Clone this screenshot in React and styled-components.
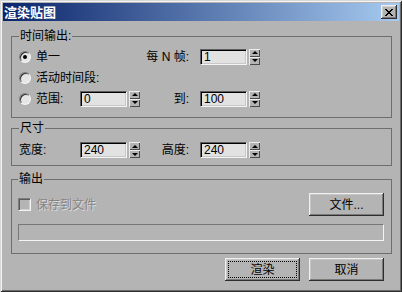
import React from "react";
import styled, { createGlobalStyle } from "styled-components";

const FACE = "#b4b4b4";

const GlobalStyle = createGlobalStyle`
  html, body {
    margin: 0;
    padding: 0;
  }
  body {
    background: ${FACE};
    font-family: "Liberation Sans", "Noto Sans CJK SC", sans-serif;
    font-size: 12px;
    color: #000;
  }
`;

const Window = styled.div`
  width: 402px;
  height: 292px;
  box-sizing: border-box;
  padding: 3px;
  background: ${FACE};
  display: flex;
  flex-direction: column;
  box-shadow: inset 1px 1px 0 #d8d8d8, inset -1px -1px 0 #2e2e2e,
    inset 2px 2px 0 #f4f4f4, inset -2px -2px 0 #6a6a6a;
`;

const TitleBar = styled.div`
  height: 18px;
  flex: none;
  display: flex;
  align-items: center;
  justify-content: space-between;
  padding: 0 2px 0 1px;
  background: linear-gradient(to right, #0a246a, #a6caf0);
`;

const Title = styled.span`
  color: #fff;
  font-family: "Noto Sans CJK SC", sans-serif;
  font-weight: 700;
  font-size: 13px;
  line-height: 18px;
`;

const CloseButton = styled.div`
  width: 16px;
  height: 14px;
  box-sizing: border-box;
  background: ${FACE};
  display: flex;
  align-items: center;
  justify-content: center;
  box-shadow: inset -1px -1px 0 #303030, inset 1px 1px 0 #f0f0f0,
    inset -2px -2px 0 #7a7a7a, inset 2px 2px 0 #cfcfcf;
`;

const Body = styled.div`
  flex: 1;
  display: flex;
  flex-direction: column;
  padding: 8px 7px 0 8px;
`;

const Group = styled.fieldset`
  margin: ${(p) => p.$top}px 0 0 0;
  padding: ${(p) => p.$pad};
  border: 1px solid #6e6e6e;
  min-width: 0;
  &:first-child {
    margin-top: 0;
  }
`;

const Legend = styled.legend`
  padding: 0 1px;
  font-size: 12px;
  line-height: 14px;
`;

const Grid = styled.div`
  display: grid;
  grid-template-columns: 61px 60px 60px 60px;
  grid-auto-rows: ${(p) => p.$row}px;
  align-items: center;
`;

const Label = styled.span`
  line-height: 14px;
  white-space: nowrap;
  grid-column: ${(p) => p.$span || "auto"};
`;

const RightLabel = styled(Label)`
  text-align: right;
  padding-right: 11px;
`;

const Option = styled.label`
  display: flex;
  align-items: center;
  gap: 5px;
  line-height: 14px;
  white-space: nowrap;
  grid-column: ${(p) => p.$span || "auto"};
`;

const RadioDot = styled.span`
  width: 12px;
  height: 12px;
  flex: none;
  box-sizing: border-box;
  border-radius: 50%;
  border: 1px solid;
  border-color: #7c7c7c #f4f4f4 #f4f4f4 #7c7c7c;
  background: #e6e6e6;
  box-shadow: inset 1px 1px 0 #2e2e2e;
  display: flex;
  align-items: center;
  justify-content: center;
  &::after {
    content: "";
    width: 4px;
    height: 4px;
    border-radius: 50%;
    background: ${(p) => (p.$checked ? "#000" : "transparent")};
  }
`;

const SpinWrap = styled.div`
  display: flex;
  gap: 2px;
`;

const NumInput = styled.input`
  width: 47px;
  height: 16px;
  box-sizing: border-box;
  margin: 0;
  padding: 0 0 0 3px;
  border: 1px solid;
  border-color: #5e5e5e #f4f4f4 #f4f4f4 #5e5e5e;
  box-shadow: inset 1px 1px 0 #000, inset -1px -1px 0 #c8c8c8;
  background: #e2e2e2;
  font-family: "Liberation Sans", sans-serif;
  font-size: 12px;
  line-height: 14px;
  color: #000;
  outline: none;
`;

const Spinner = styled.div`
  width: 11px;
  height: 16px;
  display: flex;
  flex-direction: column;
`;

const SpinHalf = styled.div`
  flex: 1;
  background: ${FACE};
  box-shadow: inset 1px 1px 0 #ececec, inset -1px -1px 0 #4a4a4a;
  display: flex;
  align-items: center;
  justify-content: center;
  &::after {
    content: "";
    border-left: 3px solid transparent;
    border-right: 3px solid transparent;
    ${(p) =>
      p.$down ? "border-top: 3px solid #000;" : "border-bottom: 3px solid #000;"}
  }
`;

const FileRow = styled.div`
  display: flex;
  align-items: center;
  justify-content: space-between;
`;

const CheckOption = styled.label`
  display: flex;
  align-items: center;
  gap: 5px;
  color: #858585;
  text-shadow: 1px 1px 0 #dcdcdc;
  line-height: 14px;
`;

const CheckBox = styled.span`
  width: 13px;
  height: 13px;
  box-sizing: border-box;
  border: 1px solid;
  border-color: #7c7c7c #f4f4f4 #f4f4f4 #7c7c7c;
  box-shadow: inset 1px 1px 0 #5a5a5a, inset -1px -1px 0 #cfcfcf;
  background: ${FACE};
`;

const PathField = styled.div`
  height: 17px;
  margin-top: 8px;
  box-sizing: border-box;
  border-top: 1px solid #777;
  border-left: 1px solid #777;
  border-bottom: 1px solid #f4f4f4;
  border-right: 1px solid #f4f4f4;
  background: ${FACE};
`;

const ButtonRow = styled.div`
  display: flex;
  justify-content: flex-end;
  gap: 9px;
  margin-top: 4px;
  padding-right: 8px;
`;

const Button = styled.button`
  width: 75px;
  height: 23px;
  margin: 0;
  padding: 3px;
  border: none;
  background: ${FACE};
  box-shadow: inset -1px -1px 0 #2e2e2e, inset 1px 1px 0 #f0f0f0,
    inset -2px -2px 0 #7a7a7a, inset 2px 2px 0 #c6c6c6;
  font-family: "Liberation Sans", "Noto Sans CJK SC", sans-serif;
  font-size: 12px;
  color: #000;
  display: flex;
`;

const ButtonFace = styled.span`
  flex: 1;
  display: flex;
  align-items: center;
  justify-content: center;
  border: 1px dotted ${(p) => (p.$focus ? "#000" : "transparent")};
  line-height: 14px;
`;

const X_PATTERN = [
  "11000011",
  "01100110",
  "00111100",
  "00011000",
  "00111100",
  "01100110",
  "11000011",
];

function CloseGlyph() {
  const rects = [];
  X_PATTERN.forEach((row, y) =>
    row.split("").forEach((c, x) => {
      if (c === "1") rects.push(<rect key={`${x}-${y}`} x={x} y={y} width="1" height="1" />);
    })
  );
  return (
    <svg width="8" height="7" viewBox="0 0 8 7" shapeRendering="crispEdges" fill="#000">
      {rects}
    </svg>
  );
}

function SpinField({ value }) {
  return (
    <SpinWrap>
      <NumInput readOnly defaultValue={value} />
      <Spinner>
        <SpinHalf />
        <SpinHalf $down />
      </Spinner>
    </SpinWrap>
  );
}

function Radio({ checked, children, span }) {
  return (
    <Option $span={span}>
      <RadioDot $checked={checked} />
      {children}
    </Option>
  );
}

export default function App() {
  return (
    <>
      <GlobalStyle />
      <Window>
        <TitleBar>
          <Title>渲染贴图</Title>
          <CloseButton>
            <CloseGlyph />
          </CloseButton>
        </TitleBar>
        <Body>
          <Group $top={0} $pad="3px 7px 8px 7px">
            <Legend>时间输出:</Legend>
            <Grid $row={21}>
              <Radio checked span="1 / 3">单一</Radio>
              <RightLabel>每 N 帧:</RightLabel>
              <SpinField value="1" />
              <Radio span="1 / 5">活动时间段:</Radio>
              <Radio>范围:</Radio>
              <SpinField value="0" />
              <RightLabel>到:</RightLabel>
              <SpinField value="100" />
            </Grid>
          </Group>
          <Group $top={3} $pad="7px 7px 7px 7px">
            <Legend>尺寸</Legend>
            <Grid $row={16}>
              <Label>宽度:</Label>
              <SpinField value="240" />
              <RightLabel>高度:</RightLabel>
              <SpinField value="240" />
            </Grid>
          </Group>
          <Group $top={6} $pad="7px 7px 12px 6px">
            <Legend>输出</Legend>
            <FileRow>
              <CheckOption>
                <CheckBox />
                保存到文件
              </CheckOption>
              <Button>
                <ButtonFace>文件...</ButtonFace>
              </Button>
            </FileRow>
            <PathField />
          </Group>
          <ButtonRow>
            <Button>
              <ButtonFace $focus>渲染</ButtonFace>
            </Button>
            <Button>
              <ButtonFace>取消</ButtonFace>
            </Button>
          </ButtonRow>
        </Body>
      </Window>
    </>
  );
}
